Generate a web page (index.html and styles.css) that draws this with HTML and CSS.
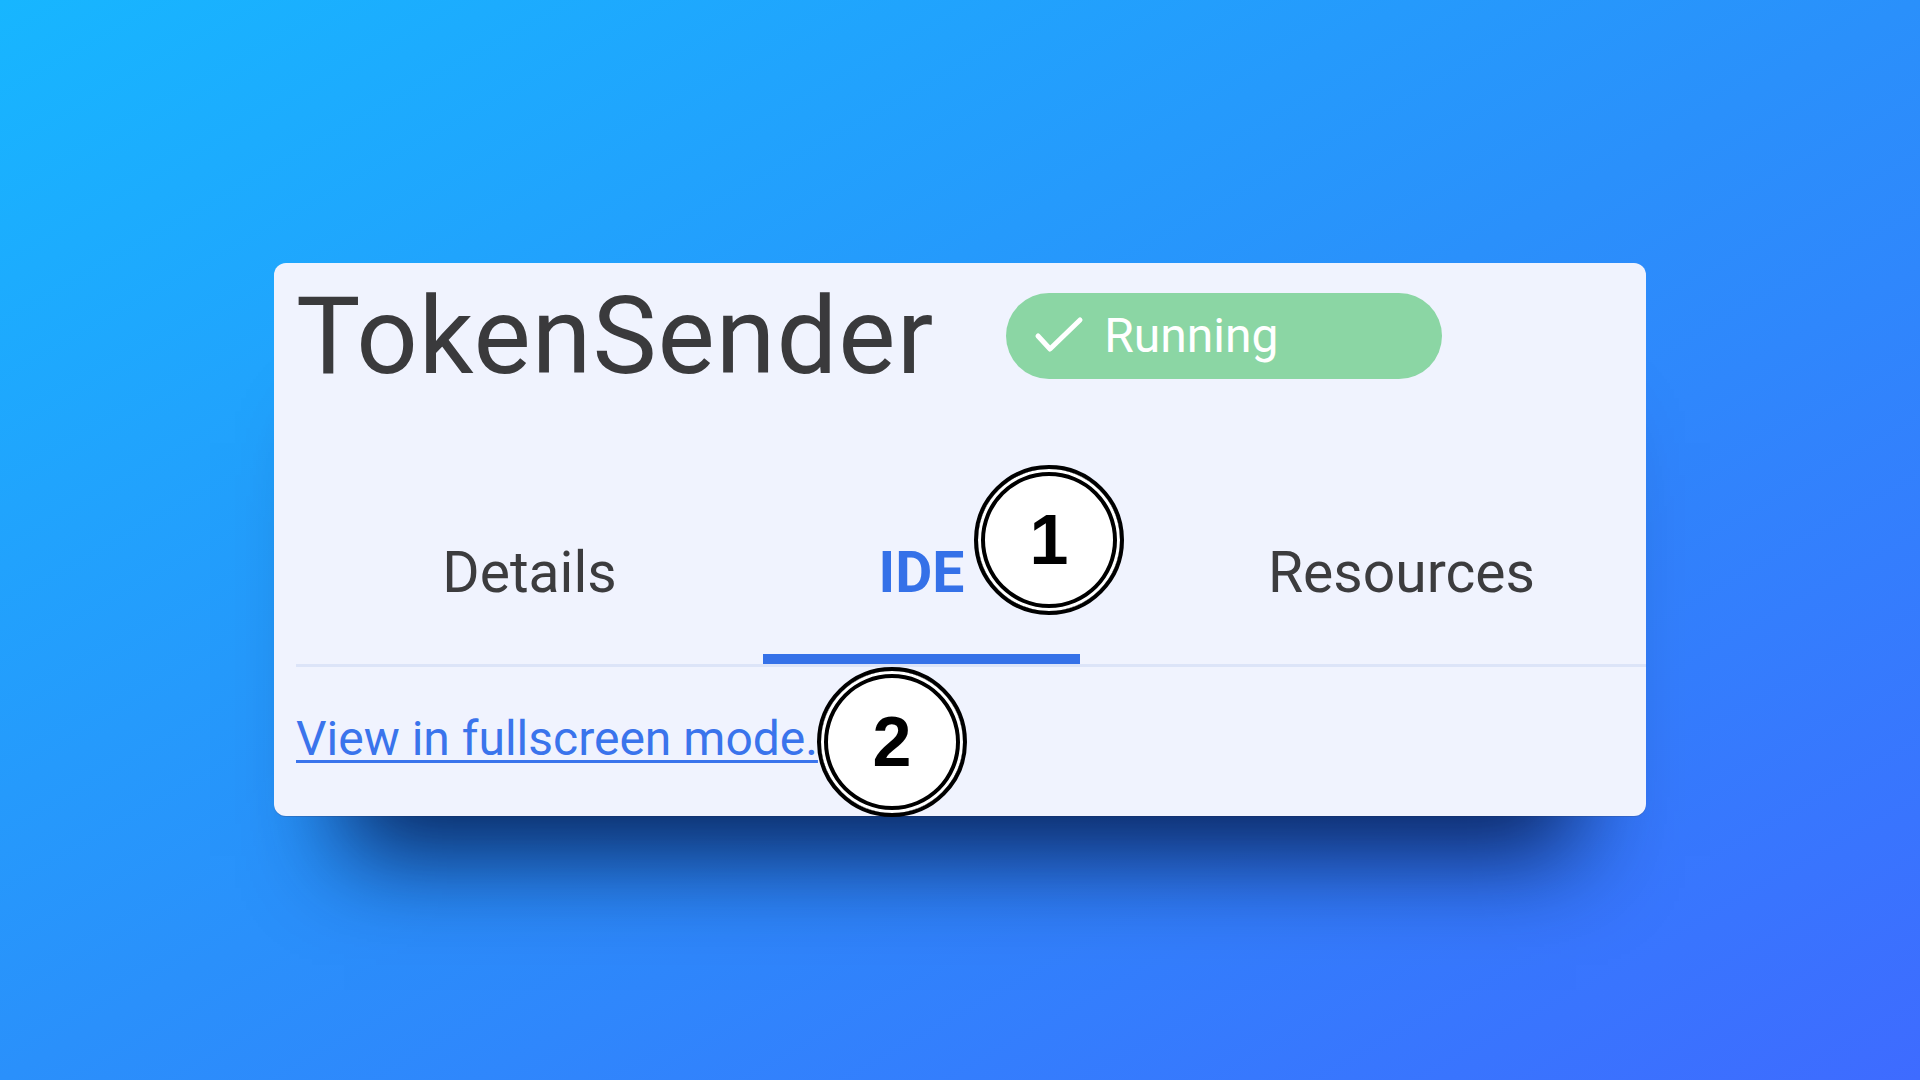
FILE: index.html
```html
<!DOCTYPE html>
<html lang="en">
<head>
<meta charset="utf-8">
<title>TokenSender</title>
<link rel="stylesheet" href="styles.css">
</head>
<body>
<div class="stage">
  <div class="card">
    <div class="header">
      <h1 class="title">TokenSender</h1>
      <div class="status">
        <svg class="status-icon" width="50" height="40" viewBox="0 0 50 40"><polyline points="4,20 16,33 46,4" fill="none" stroke="#ffffff" stroke-width="5" stroke-linecap="round" stroke-linejoin="round"/></svg>
        <span class="status-text">Running</span>
      </div>
    </div>
    <div class="tabs">
      <div class="tab tab-details">Details</div>
      <div class="tab tab-ide active">IDE</div>
      <div class="tab tab-resources">Resources</div>
    </div>
    <div class="content">
      <a class="link" href="#">View in fullscreen mode.</a>
    </div>
    <div class="marker marker-1">1</div>
    <div class="marker marker-2">2</div>
  </div>
</div>
</body>
</html>
```

FILE: styles.css
```css
html, body {
  margin: 0;
  padding: 0;
}
body {
  width: 1920px;
  height: 1080px;
  overflow: hidden;
  background: linear-gradient(to bottom right, #17b6ff 0%, #2a90fb 50%, #3e6bff 100%);
  font-family: Roboto, "Liberation Sans", sans-serif;
}
.stage {
  padding: 263px 0 0 274px;
}
.card {
  position: relative;
  width: 1372px;
  height: 553px;
  box-sizing: border-box;
  padding-left: 22px;
  background: #f0f3fe;
  border-radius: 12px;
  box-shadow: 0 110px 90px -70px rgba(5, 25, 75, 0.9), 0 1px 0 rgba(60, 90, 150, 0.35);
}
.header {
  display: flex;
  align-items: center;
  height: 146px;
}
.title {
  margin: 0;
  font-size: 108px;
  line-height: 1;
  font-weight: 400;
  color: #3a3a3c;
  letter-spacing: 1px;
}
.status {
  display: flex;
  align-items: center;
  box-sizing: border-box;
  width: 436px;
  height: 86px;
  margin-left: 72px;
  padding-left: 28px;
  border-radius: 43px;
  background: #8bd6a4;
  color: #ffffff;
}
.status-icon {
  display: block;
  margin-right: 20px;
}
.status-text {
  font-size: 48px;
  line-height: 1;
}
.tabs {
  display: flex;
  height: 255px;
  border-bottom: 3px solid #dce4f8;
}
.tab {
  display: flex;
  align-items: flex-end;
  justify-content: center;
  box-sizing: border-box;
  padding-bottom: 47px;
  border-bottom: 10px solid transparent;
  font-size: 57px;
  line-height: 68px;
  color: #3c3c3e;
}
.tab-details {
  width: 467px;
}
.tab-ide {
  width: 317px;
}
.tab-resources {
  justify-content: flex-start;
  padding-left: 188px;
}
.tab.active {
  color: #3571e8;
  font-weight: 700;
  border-bottom-color: #3571e8;
}
.content {
  padding-top: 43px;
}
.link {
  font-size: 48px;
  line-height: 58px;
  color: #3a74ec;
  text-decoration: underline;
  text-decoration-thickness: 3px;
  text-underline-offset: 5px;
}
.marker {
  position: absolute;
  width: 150px;
  height: 150px;
  box-sizing: border-box;
  border: 4px solid #000000;
  border-radius: 50%;
  background: #ffffff;
  box-shadow: inset 0 0 0 3px #ffffff, inset 0 0 0 7px #000000;
  display: flex;
  align-items: center;
  justify-content: center;
  font-family: "Liberation Sans", Arial, sans-serif;
  font-weight: 700;
  font-size: 70px;
  line-height: 1;
  color: #000000;
}
.marker-1 {
  left: 700px;
  top: 202px;
}
.marker-2 {
  left: 543px;
  top: 404px;
}
```
